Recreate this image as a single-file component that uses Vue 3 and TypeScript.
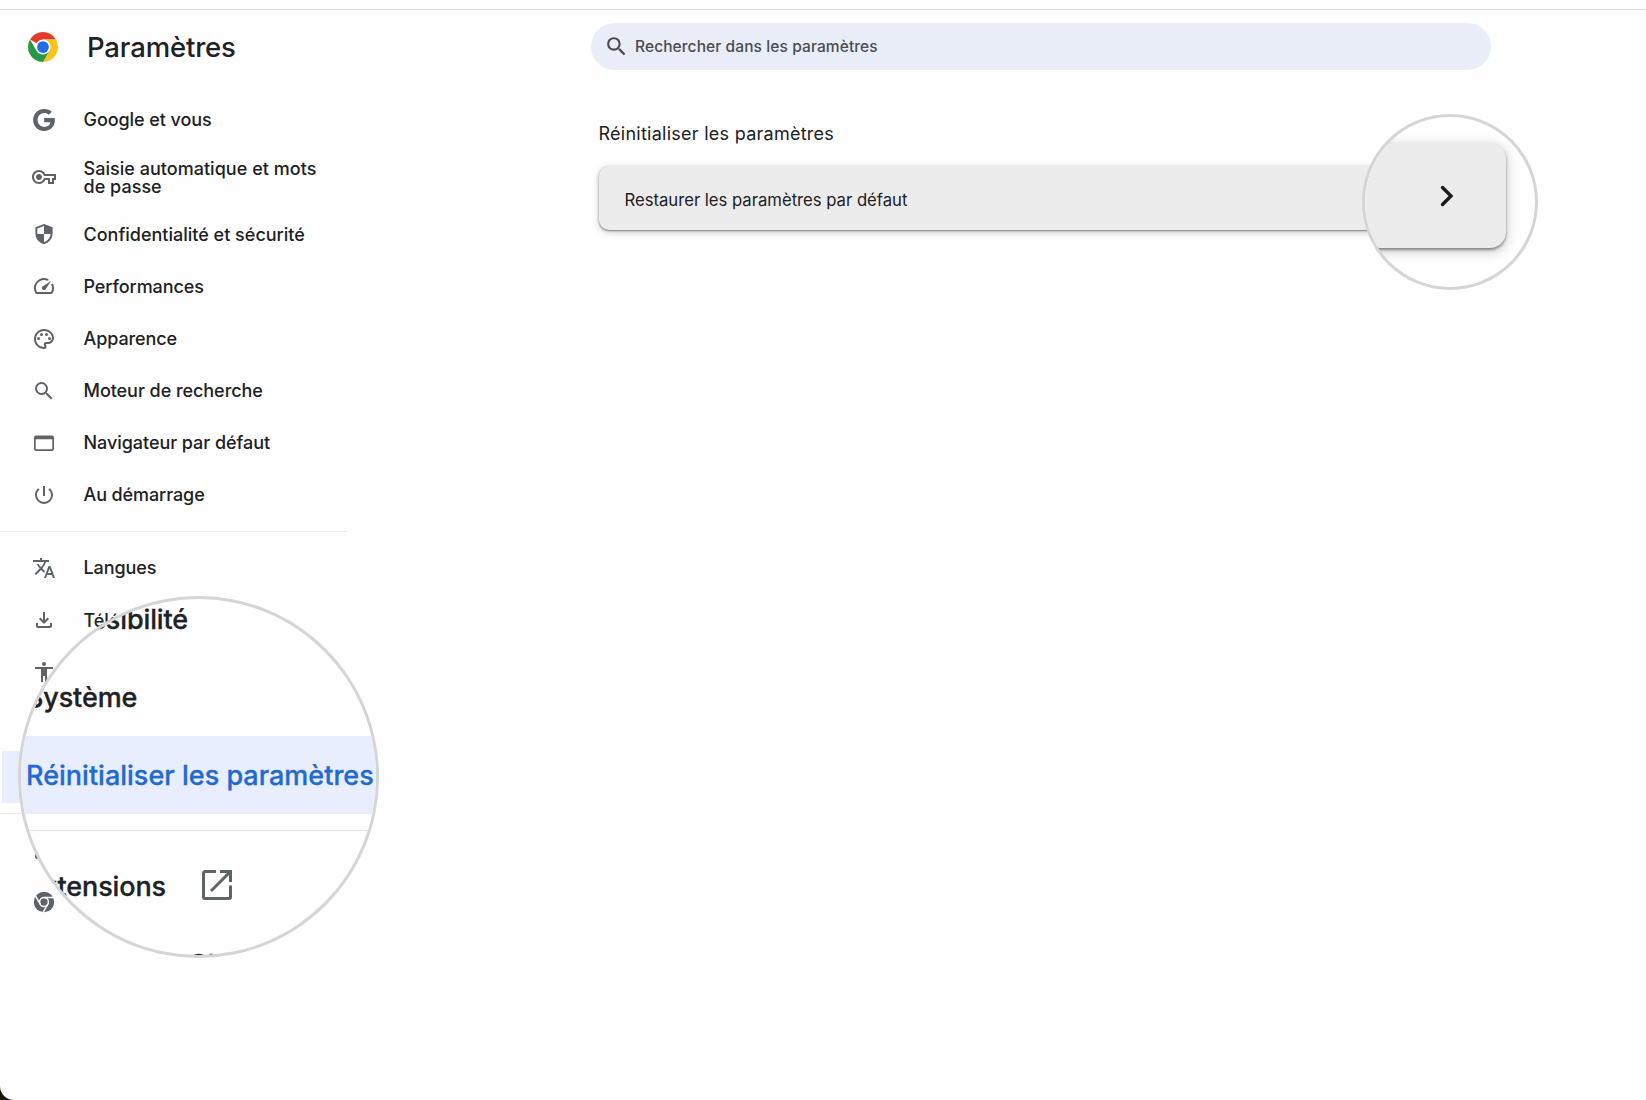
<script setup lang="ts">
interface Entry {
  label: string
  icon: string
  spacing: number
  tall?: boolean
  active?: boolean
}

const primary: Entry[] = [
  { label: 'Google et vous', icon: 'google', spacing: -0.08 },
  { label: 'Saisie automatique et mots de passe', icon: 'key', spacing: 0.03, tall: true },
  { label: 'Confidentialité et sécurité', icon: 'shield', spacing: 0 },
  { label: 'Performances', icon: 'speed', spacing: -0.08 },
  { label: 'Apparence', icon: 'palette', spacing: -0.1 },
  { label: 'Moteur de recherche', icon: 'magnifier', spacing: -0.05 },
  { label: 'Navigateur par défaut', icon: 'browser', spacing: -0.05 },
  { label: 'Au démarrage', icon: 'power', spacing: -0.1 },
]

const advanced: Entry[] = [
  { label: 'Langues', icon: 'translate', spacing: -0.1 },
  { label: 'Téléchargements', icon: 'download', spacing: -0.05 },
  { label: 'Accessibilité', icon: 'person', spacing: 0 },
  { label: 'Système', icon: 'wrench', spacing: 0 },
  { label: 'Réinitialiser les paramètres', icon: 'reset', spacing: 0, active: true },
]

const about: Entry[] = [
  { label: 'Extensions', icon: 'extension', spacing: 0 },
  { label: 'À propos de Chrome', icon: 'chrome', spacing: 0 },
]

const groups: Entry[][] = [primary, advanced, about]

const icons: Record<string, string> = {
  google: 'M12.2 1C6 1 1.1 5.9 1.1 12s4.9 11 11.1 11c6.4 0 10.7-4.5 10.7-10.9 0-.8-.1-1.5-.2-2.1H12.2v4.2h6.2c-.5 2.9-2.8 4.7-6.1 4.7-3.8 0-6.7-3.1-6.7-6.9s2.9-6.9 6.7-6.9c1.7 0 3.2.6 4.4 1.7l3.2-3.1C17.9 2 15.3 1 12.2 1z',
  key: 'M22 19h-6v-4h-2.68c-1.14 2.42-3.6 4-6.32 4-3.86 0-7-3.14-7-7s3.14-7 7-7c2.72 0 5.17 1.58 6.32 4H24v6h-2v4zm-4-2h2v-4h2v-2H11.94l-.23-.67C11.01 8.34 9.11 7 7 7c-2.76 0-5 2.24-5 5s2.24 5 5 5c2.11 0 4.01-1.34 4.71-3.33l.23-.67H18v4zM7 15c-1.65 0-3-1.35-3-3s1.35-3 3-3 3 1.35 3 3-1.35 3-3 3z',
  shield: 'M12 2L3.4 5.3v6c0 5.2 3.6 9.7 8.6 11 5-1.3 8.6-5.8 8.6-11v-6L12 2zm0 10.1h6.7c-.5 3.9-3.1 7-6.7 8.1v-8.1H5.3V6.6L12 4.1v8z',
  speed: 'M19.46 10a1 1 0 0 0-.07 1 7.55 7.55 0 0 1 .5 1.73 8 8 0 0 1-.66 4.89.83.83 0 0 1-.18.22l-.16.16H5.11l-.18-.18a.6.6 0 0 1-.15-.19A8 8 0 0 1 12 6c1.06 0 2.1.2 3.06.59a1 1 0 0 0 1-.16.9.9 0 0 0-.3-1.6A10 10 0 0 0 3.26 18.9 2 2 0 0 0 5 20h14.02a2 2 0 0 0 1.74-1A10 10 0 0 0 21.1 10.1a.9.9 0 0 0-1.64-.1zM10.6 15.4a2 2 0 0 0 2.83 0l5.66-8.49-8.49 5.66a2 2 0 0 0 0 2.83z',
  palette: 'M12 22C6.49 22 2 17.51 2 12S6.49 2 12 2s10 4.04 10 9c0 3.31-2.69 6-6 6h-1.77c-.28 0-.5.22-.5.5 0 .12.05.23.13.33.41.47.64 1.06.64 1.67A2.5 2.5 0 0 1 12 22zm0-18c-4.41 0-8 3.59-8 8s3.59 8 8 8c.28 0 .5-.22.5-.5a.54.54 0 0 0-.14-.35c-.41-.46-.63-1.05-.63-1.65a2.5 2.5 0 0 1 2.5-2.5H16c2.21 0 4-1.79 4-4 0-3.86-3.59-7-8-7zM6.5 10a1.5 1.5 0 1 0 0 3 1.5 1.5 0 0 0 0-3zm3-4a1.5 1.5 0 1 0 0 3 1.5 1.5 0 0 0 0-3zm5 0a1.5 1.5 0 1 0 0 3 1.5 1.5 0 0 0 0-3zm3 4a1.5 1.5 0 1 0 0 3 1.5 1.5 0 0 0 0-3z',
  magnifier: 'M15.5 14h-.79l-.28-.27A6.471 6.471 0 0 0 16 9.5 6.5 6.5 0 1 0 9.5 16c1.61 0 3.09-.59 4.23-1.57l.27.28v.79l5 4.99L20.49 19l-4.99-5zm-6 0C7.01 14 5 11.99 5 9.5S7.01 5 9.5 5 14 7.01 14 9.5 11.99 14 9.5 14z',
  browser: 'M20 4.5H4a2 2 0 0 0-2 2v11.5a2 2 0 0 0 2 2h16a2 2 0 0 0 2-2V6.5a2 2 0 0 0-2-2zm.3 13.8H3.7V8.3h16.6v10z',
  power: 'M13 3h-2v10h2V3zm4.83 2.17l-1.42 1.42A6.92 6.92 0 0 1 19 12c0 3.87-3.13 7-7 7A6.995 6.995 0 0 1 7.58 6.58L6.17 5.17A8.932 8.932 0 0 0 3 12a9 9 0 0 0 18 0c0-2.74-1.23-5.18-3.17-6.83z',
  translate: 'M12.87 15.07l-2.54-2.51.03-.03A17.52 17.52 0 0 0 14.07 6H17V4h-7V2H8v2H1v1.99h11.17C11.5 7.92 10.44 9.75 9 11.35 8.07 10.32 7.3 9.19 6.69 8h-2c.73 1.63 1.73 3.17 2.98 4.56l-5.09 5.02L4 19l5-5 3.11 3.11.76-2.04zM18.5 10h-2L12 22h2l1.12-3h4.75L21 22h2l-4.5-12zm-2.62 7l1.62-4.33L19.12 17h-3.24z',
  download: 'M18 15v3H6v-3H4v3c0 1.1.9 2 2 2h12c1.1 0 2-.9 2-2v-3h-2zm-1-4l-1.41-1.41L13 12.17V4h-2v8.17L8.41 9.59 7 11l5 5 5-5z',
  person: 'M12 2a2 2 0 1 1 0 4 2 2 0 0 1 0-4zm9 7h-6v13h-2v-6h-2v6H9V9H3V7h18v2z',
  wrench: 'M22 19l-9-9c.9-2.3.4-5-1.5-6.9-2-2-5-2.4-7.4-1.3L8.4 6 5.5 9 1.1 4.7C0 7.1.4 10.1 2.4 12.1c1.9 1.9 4.6 2.4 6.9 1.5l9 9z',
  reset: 'M12 5V1L7 6l5 5V7a6 6 0 1 1-6 6H4a8 8 0 1 0 8-8z',
  extension: 'M20.5 11H19V7a2 2 0 0 0-2-2h-4V3.5a2.5 2.5 0 0 0-5 0V5H5a2 2 0 0 0-2 2v3.8h1.5a2.7 2.7 0 0 1 0 5.4H3V19a2 2 0 0 0 2 2h2.8v-1.5a2.7 2.7 0 0 1 5.4 0V21H17a2 2 0 0 0 2-2v-3h1.5a2.5 2.5 0 0 0 0-5z',
}
</script>

<template>
  <div class="window">
    <header class="toolbar">
      <div class="brand">
        <svg class="logo" viewBox="0 0 48 48">
          <path fill="#e33b2e" d="M24 24 L3.22 12 A24 24 0 0 1 44.78 12 L24 12z" />
          <path fill="#fcc31e" d="M24 12 H44.78 A24 24 0 0 1 24 48 L34.39 30z" />
          <path fill="#279847" d="M34.39 30 L24 48 A24 24 0 0 1 3.22 12 L13.61 30 L24 36z" />
          <circle cx="24" cy="24" r="12" fill="#fff" />
          <circle cx="24" cy="24" r="9.4" fill="#1d6fe8" />
        </svg>
        <h1>Paramètres</h1>
      </div>
      <div class="search">
        <svg viewBox="0 0 24 24"><path :d="icons.magnifier" /></svg>
        <span>Rechercher dans les paramètres</span>
      </div>
    </header>

    <div class="body">
      <nav class="sidebar">
        <div v-for="(group, g) in groups" :key="g" class="group">
          <div
            v-for="entry in group"
            :key="entry.label"
            class="entry"
            :class="{ tall: entry.tall, active: entry.active }"
          >
            <svg v-if="entry.icon === 'chrome'" class="icon" viewBox="0 0 24 24">
              <circle cx="12" cy="12" r="10.2" />
              <g fill="none" stroke="#fefefe" stroke-width="1.5">
                <circle cx="12" cy="12" r="4.4" />
                <path d="M12 7.6H22M8.2 14.2L3 5.2M15.8 14.2L10.8 23" />
              </g>
            </svg>
            <svg v-else class="icon" viewBox="0 0 24 24">
              <path fill-rule="evenodd" :d="icons[entry.icon]" />
            </svg>
            <span class="label" :style="{ letterSpacing: entry.spacing + 'px' }">{{ entry.label }}</span>
          </div>
        </div>
      </nav>

      <main class="content">
        <h2>Réinitialiser les paramètres</h2>
        <div class="card">
          <span>Restaurer les paramètres par défaut</span>
        </div>
      </main>
    </div>

    <div class="lens lens-menu">
      <div class="lens-row">Accessibilité</div>
      <div class="lens-row">Système</div>
      <div class="lens-row selected">Réinitialiser les paramètres</div>
      <div class="lens-rule"></div>
      <div class="lens-row">
        Extensions
        <svg class="open" viewBox="0 0 30 30">
          <path d="M14 1.5H3a1.5 1.5 0 0 0-1.5 1.5V27A1.5 1.5 0 0 0 3 28.5H27A1.5 1.5 0 0 0 28.5 27V15.5" />
          <path d="M18 1.5H28.5V12M28 2L9 21" />
        </svg>
      </div>
      <div class="lens-row">À propos de Chrome</div>
    </div>

    <div class="lens lens-card">
      <div class="card-zoom">
        <svg viewBox="0 0 14 22"><path d="M2.5 2.5L11 11L2.5 19.5" /></svg>
      </div>
    </div>
  </div>
</template>

<style>
html,
body {
  margin: 0;
  background: #141a06;
}
</style>

<style scoped>
.window {
  position: relative;
  box-sizing: border-box;
  width: 1646px;
  height: 1100px;
  overflow: hidden;
  padding-top: 9px;
  background: #fefefe;
  border-bottom-left-radius: 14px;
  color: #202124;
  font-family: Inter, 'Liberation Sans', sans-serif;
  font-weight: 500;
}

.toolbar {
  display: flex;
  align-items: center;
  box-sizing: border-box;
  height: 75px;
  border-top: 1px solid #dcdcdc;
}

.brand {
  display: flex;
  align-items: center;
  width: 563px;
  padding-left: 28px;
}

.logo {
  width: 30px;
  height: 30px;
  margin-top: -1px;
}

h1 {
  margin: 0 0 0 29px;
  font-size: 27.5px;
  font-weight: 500;
  line-height: 36px;
  letter-spacing: -0.15px;
}

.search {
  display: flex;
  align-items: center;
  box-sizing: border-box;
  width: 900px;
  height: 47px;
  margin-top: -2px;
  padding-left: 13px;
  border-radius: 24px;
  background: #e9edf8;
  color: #4a4c50;
  font-size: 15.5px;
  letter-spacing: 0.1px;
}

.search svg {
  width: 25px;
  height: 25px;
  margin-right: 6px;
  fill: #46484c;
}

.body {
  display: flex;
  padding-top: 10px;
}

.sidebar {
  width: 347px;
  margin-right: 251px;
}

.group + .group {
  margin-top: 10px;
  padding-top: 10.1px;
  border-top: 1px solid #ececee;
}

.entry {
  display: flex;
  align-items: center;
  box-sizing: border-box;
  height: 52.1px;
  margin-left: 2px;
  padding: 0.4px 0 0 30px;
  font-size: 18px;
  line-height: 18px;
}

.entry.tall {
  height: 62.5px;
}

.entry.active {
  background: #e8eefd;
  color: #2369d2;
}

.icon {
  flex: none;
  width: 24px;
  height: 24px;
  margin-bottom: 1px;
  fill: #5f6368;
}

.label {
  width: 240px;
  margin-left: 27.5px;
}

.content {
  width: 900px;
}

h2 {
  margin: 29px 0 21.5px 0.5px;
  font-size: 18px;
  font-weight: 400;
  line-height: 22px;
  letter-spacing: 0.26px;
}

.card {
  display: flex;
  align-items: center;
  box-sizing: border-box;
  height: 64px;
  margin: -0.5px 0 0 0.5px;
  padding: 3px 0 0 26px;
  border-radius: 10px;
  background: #ececec;
  box-shadow: 0 1px 2px rgba(0, 0, 0, 0.45), 0 2px 6px 1px rgba(0, 0, 0, 0.16);
  font-size: 16.7px;
  font-weight: 400;
  letter-spacing: -0.02px;
}

.lens {
  position: absolute;
  box-sizing: border-box;
  overflow: hidden;
  border: 3px solid #d5d5d6;
  border-radius: 50%;
  background: #fefefe;
}

.lens-menu {
  left: 18px;
  top: 596px;
  width: 361px;
  height: 362px;
}

.lens-row {
  display: flex;
  align-items: center;
  box-sizing: border-box;
  height: 78px;
  padding: 1px 0 0 5px;
  font-size: 27px;
  letter-spacing: -0.13px;
  -webkit-text-stroke: 0.3px currentColor;
  white-space: nowrap;
}

.lens-row:first-child {
  margin-top: -19px;
}

.lens-row.selected {
  background: #e8eefd;
  color: #2369d2;
  letter-spacing: 0.01px;
}

.lens-rule {
  margin: 16px 0 15px;
  border-top: 1px solid #e6e6e8;
}

.lens-rule ~ .lens-row {
  padding-top: 2px;
}

.open {
  width: 30px;
  height: 30px;
  margin: 0 0 2px 36px;
  fill: none;
  stroke: #5f6368;
  stroke-width: 3;
}

.lens-card {
  left: 1362px;
  top: 114px;
  width: 176px;
  height: 176px;
}

.card-zoom {
  display: flex;
  align-items: center;
  justify-content: flex-end;
  box-sizing: border-box;
  width: 180px;
  height: 105px;
  margin: 26px 0 0 -39px;
  padding-right: 52.5px;
  border-radius: 16px;
  background: #ececec;
  box-shadow: 0 2px 3px rgba(0, 0, 0, 0.4), 0 3px 11px 2px rgba(0, 0, 0, 0.16);
}

.card-zoom svg {
  width: 14px;
  height: 22px;
  fill: none;
  stroke: #1b1b1d;
  stroke-width: 3.4;
  stroke-linecap: round;
}
</style>
